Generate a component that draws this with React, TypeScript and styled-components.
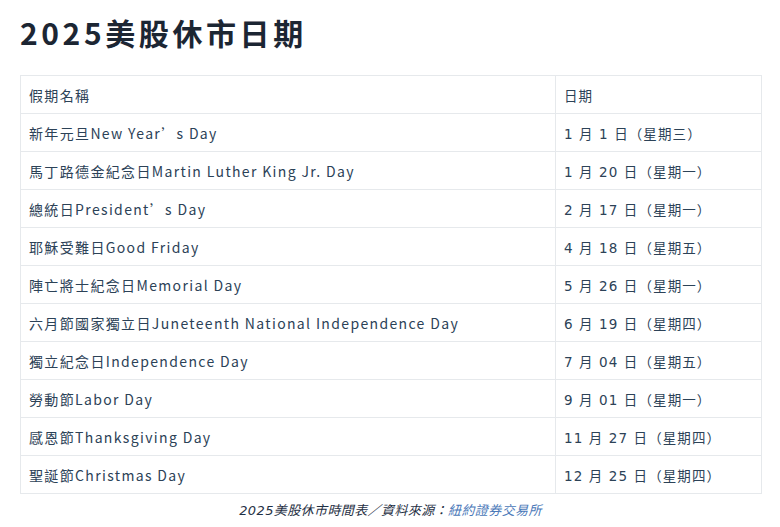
import React from "react";
import styled, { createGlobalStyle } from "styled-components";

const Global = createGlobalStyle`
  html, body { margin: 0; padding: 0; background: #fff; }
  body { font-family: "Noto Sans CJK TC", sans-serif; color: #2c3e50; }
`;

const Page = styled.div`
  padding: 10px 19px 0 20px;
`;

const Title = styled.h1`
  margin: 0 0 21px 0;
  font-family: "Noto Sans CJK TC", sans-serif;
  font-size: 30px;
  line-height: 44px;
  font-weight: 700;
  letter-spacing: 3.6px;
  color: #1c2633;
`;

const Table = styled.table`
  width: 742px;
  border-collapse: collapse;
  border: 1px solid #e6e9ec;
`;

const Cell = styled.td<{ $date?: boolean }>`
  height: 37px;
  padding: 0 8px;
  border: 1px solid #e6e9ec;
  font-size: ${(p) => (p.$date ? "13.5px" : "14px")};
  letter-spacing: ${(p) => (p.$date ? "1.1px" : "1.35px")};
  color: #2c4257;
  width: ${(p) => (p.$date ? "189px" : "auto")};
  font-family: ${(p) =>
    p.$date
      ? '"DejaVu Sans", "Noto Sans CJK TC", sans-serif'
      : '"Noto Sans CJK TC", sans-serif'};
`;

const Caption = styled.p`
  margin: 6px 0 0 0;
  text-align: center;
  font-style: italic;
  font-size: 13px;
  letter-spacing: 0.4px;
  color: #1f3044;
  font-family: "DejaVu Sans", "Noto Sans CJK TC", sans-serif;
`;

const Link = styled.a`
  color: #4a78b8;
  text-decoration: none;
`;

const rows: [string, string][] = [
  ["新年元旦New Year’s Day", "1 月 1 日（星期三）"],
  ["馬丁路德金紀念日Martin Luther King Jr. Day", "1 月 20 日（星期一）"],
  ["總統日President’s Day", "2 月 17 日（星期一）"],
  ["耶穌受難日Good Friday", "4 月 18 日（星期五）"],
  ["陣亡將士紀念日Memorial Day", "5 月 26 日（星期一）"],
  ["六月節國家獨立日Juneteenth National Independence Day", "6 月 19 日（星期四）"],
  ["獨立紀念日Independence Day", "7 月 04 日（星期五）"],
  ["勞動節Labor Day", "9 月 01 日（星期一）"],
  ["感恩節Thanksgiving Day", "11 月 27 日（星期四）"],
  ["聖誕節Christmas Day", "12 月 25 日（星期四）"],
];

export default function App() {
  return (
    <>
      <Global />
      <Page>
        <Title>2025美股休市日期</Title>
        <Table>
          <tbody>
            <tr>
              <Cell>假期名稱</Cell>
              <Cell $date>日期</Cell>
            </tr>
            {rows.map(([n, d]) => (
              <tr key={n}>
                <Cell>{n}</Cell>
                <Cell $date>{d}</Cell>
              </tr>
            ))}
          </tbody>
        </Table>
        <Caption>
          2025美股休市時間表／資料來源：<Link href="#">紐約證券交易所</Link>
        </Caption>
      </Page>
    </>
  );
}
